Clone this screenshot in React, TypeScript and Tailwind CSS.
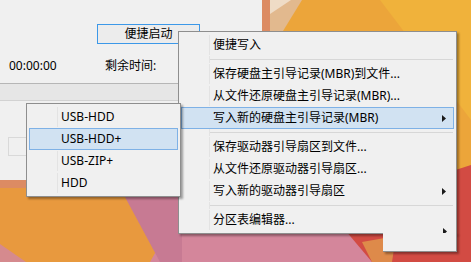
import React from 'react';

const uiFont = "font-['Noto_Sans','Noto_Sans_CJK_SC',sans-serif]";

type Row =
  | { kind: 'item'; label: string; sub?: boolean; hot?: boolean }
  | { kind: 'sep' };

const mainMenu: Row[] = [
  { kind: 'item', label: '便捷写入' },
  { kind: 'sep' },
  { kind: 'item', label: '保存硬盘主引导记录(MBR)到文件...' },
  { kind: 'item', label: '从文件还原硬盘主引导记录(MBR)...' },
  { kind: 'item', label: '写入新的硬盘主引导记录(MBR)', sub: true, hot: true },
  { kind: 'sep' },
  { kind: 'item', label: '保存驱动器引导扇区到文件...' },
  { kind: 'item', label: '从文件还原驱动器引导扇区...' },
  { kind: 'item', label: '写入新的驱动器引导扇区', sub: true },
  { kind: 'sep' },
  { kind: 'item', label: '分区表编辑器...' },
];

const subMenu: Row[] = [
  { kind: 'item', label: 'USB-HDD' },
  { kind: 'item', label: 'USB-HDD+', hot: true },
  { kind: 'item', label: 'USB-ZIP+' },
  { kind: 'item', label: 'HDD' },
];

function Arrow() {
  return (
    <svg width="4" height="7" viewBox="0 0 4 7" className="block">
      <path d="M0 0L4 3.5L0 7Z" fill="#1a1a1a" />
    </svg>
  );
}

function MenuRows({ rows }: { rows: Row[] }) {
  return (
    <>
      {rows.map((r, i) =>
        r.kind === 'sep' ? (
          <div key={i} className="flex h-[7px] items-center px-[1px]">
            <div className="h-full w-[28px] border-r border-[#e3e3e3]" />
            <div className="h-px flex-1 bg-[#d7d7d7]" />
          </div>
        ) : (
          <div
            key={i}
            className={`flex h-[22px] items-center border ${
              r.hot ? 'border-[#7eb1e6] bg-[#d1e2f2]' : 'border-transparent'
            }`}
          >
            <div className={`h-full w-[28px] shrink-0 ${r.hot ? '' : 'border-r border-[#e3e3e3]'}`} />
            <span className="flex-1 pl-[3px] text-[12px] leading-none text-black">{r.label}</span>
            {r.sub && (
              <span className="pr-[7px]">
                <Arrow />
              </span>
            )}
          </div>
        )
      )}
    </>
  );
}

function Wallpaper() {
  return (
    <svg width="471" height="262" viewBox="0 0 471 262" className="absolute inset-0">
      <rect width="471" height="262" fill="#e8993e" />
      <rect x="262" y="0" width="209" height="200" fill="#eca53a" />
      <polygon points="380,0 471,0 471,120" fill="#f0b23b" />
      <polygon points="270,0 302,0 283,31 270,31" fill="#e2b98e" />
      <polygon points="270,0 291,0 270,14" fill="#efdcc6" />
      <polygon points="440,175 471,165 471,262 330,262 330,225" fill="#d24b43" />
      <polygon points="178,212 345,230 372,262 150,262" fill="#d4869b" />
      <polygon points="125,197 182,197 182,262 160,262" fill="#c77a93" />
      <polygon points="362,242 396,236 392,262 372,262" fill="#de8a4a" />
      <polygon points="0,244 26,262 0,262" fill="#d58a8e" />
    </svg>
  );
}

export default function App() {
  return (
    <div className={`relative h-[262px] w-[471px] overflow-hidden ${uiFont}`}>
      <Wallpaper />

      {/* program window with its tinted frame */}
      <div className="absolute left-0 top-0 h-[188px] w-[270px] bg-[#dc8b63] pr-[8px] pb-[8px]">
        <div className="flex h-full w-full flex-col bg-[#f0f0f0] pt-[24px]">
          <div className="flex pl-[97px]">
            <button className="flex h-[20px] w-[103px] items-center justify-center border border-[#3c98e8] bg-[#ececec] text-[12px] leading-none text-black">
              便捷启动
            </button>
          </div>
          <div className="mt-[14px] flex h-[16px] items-center text-[12px] leading-none text-black">
            <span className="w-[105px] pl-[9px]">00:00:00</span>
            <span>剩余时间:</span>
          </div>
          <div className="mt-[9px] h-[18px] border-t border-b border-t-[#b6b6b6] border-b-[#d2d2d2] bg-[#e6e6e6]" />
          <div className="ml-[8px] mt-[36px] h-[19px] w-[220px] border border-[#d9d9d9]" />
        </div>
      </div>

      {/* main context menu */}
      <div className="absolute left-[178px] top-[31px] w-[279px] border border-[#8e8e8e] bg-[#f0f0f0] p-[2px] shadow-[2px_2px_2px_rgba(0,0,0,0.35)]">
        <MenuRows rows={mainMenu} />
        <div className="absolute right-[9px] top-[196px]">
          <Arrow />
        </div>
      </div>
      {/* leftover strip of the menu that was not repainted */}
      <div className="absolute left-[383px] top-[233px] h-[19px] w-[74px] border-r border-b border-[#8e8e8e] bg-[#f0f0f0] shadow-[2px_2px_2px_rgba(0,0,0,0.35)]" />

      {/* submenu */}
      <div className="absolute left-[26px] top-[103px] w-[155px] border border-[#8e8e8e] bg-[#f0f0f0] p-[2px] shadow-[2px_2px_2px_rgba(0,0,0,0.35)]">
        <MenuRows rows={subMenu} />
      </div>
    </div>
  );
}
